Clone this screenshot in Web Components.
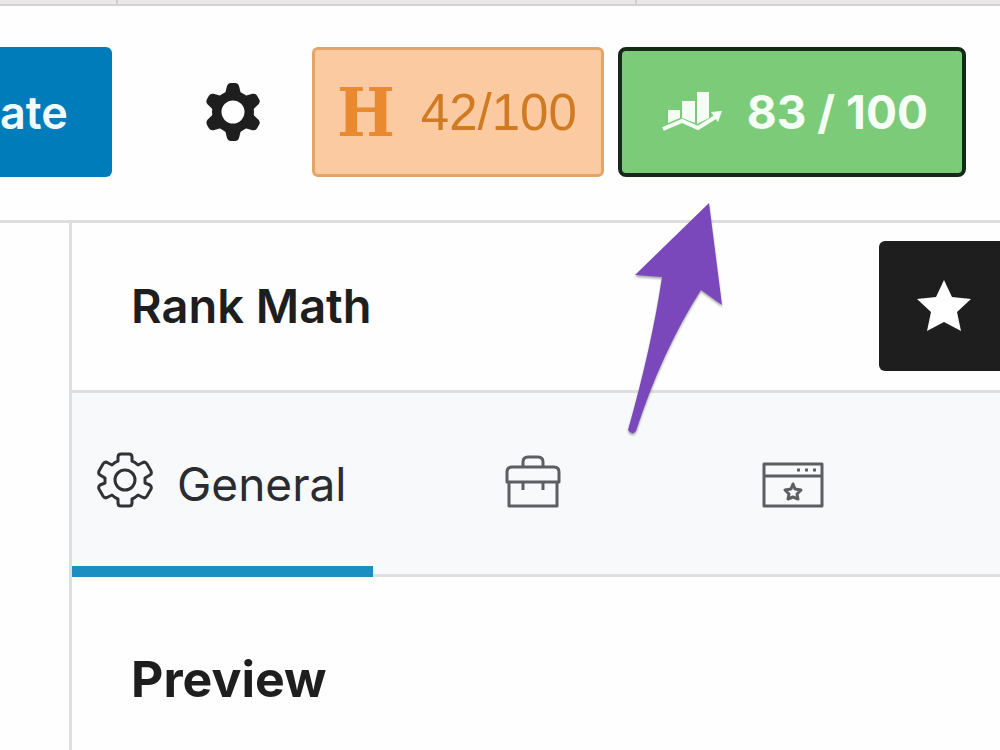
<!DOCTYPE html>
<html lang="en">
<head>
<meta charset="utf-8">
<title>Rank Math</title>
<style>
  body { margin: 0; background: #fefefe; color: #1e1e1e; font-family: Inter, "Liberation Sans", sans-serif; overflow: hidden; }
</style>
</head>
<body>
<editor-page></editor-page>
<script>
class Base extends HTMLElement {
  constructor() {
    super();
    this.attachShadow({ mode: 'open' }).innerHTML =
      '<style>*{box-sizing:border-box}button{font:inherit;color:inherit;margin:0;border:0;background:none;cursor:pointer}svg{display:block;flex:none}</style>' + this.constructor.html;
  }
}

customElements.define('browser-strip', class extends Base {
  static html = `
    <style>
      :host { display: grid; grid-template-columns: 118px 519px 1fr; height: 6px; background: #e9e7e8; border-bottom: 2px solid #d4d2d3; }
      i { border-right: 2px solid #cfcdce; }
      i:last-child { border: 0; }
    </style><i></i><i></i><i></i>`;
});

customElements.define('update-button', class extends Base {
  static html = `
    <style>
      :host { display: block; }
      button { height: 130px; padding: 0 44px 0 0; background: #007cba; color: #f0fbff; border-radius: 0 6px 6px 0; font-size: 45px; font-weight: 600; }
    </style><button type="button"><slot></slot></button>`;
});

customElements.define('settings-button', class extends Base {
  static html = `
    <style>:host { display: block; } button { padding: 0; display: block; }</style>
    <button type="button" aria-label="Settings">
      <svg width="56" height="60" viewBox="-28 -30 56 60" fill="#1e1e1e">
        <path fill-rule="evenodd" d="M0-21A21 21 0 1 1 0 21A21 21 0 1 1 0-21M0-11.500A11.500 11.500 0 1 0 0 11.500A11.500 11.500 0 1 0 0-11.500"/>
        <path id="k" d="M-8-18L-6-26Q-5-29-2-29H2Q5-29 6-26L8-18L8-14H-8Z"/>
        <use href="#k" transform="rotate(60)"/><use href="#k" transform="rotate(120)"/><use href="#k" transform="rotate(180)"/><use href="#k" transform="rotate(240)"/><use href="#k" transform="rotate(300)"/>
      </svg>
    </button>`;
});

customElements.define('headline-score', class extends Base {
  static html = `
    <style>
      :host { display: block; }
      button { height: 130px; display: flex; align-items: center; gap: 26px; padding: 0 24px 0 22px; background: #fbcaa0; border: 3px solid #e5a467; border-radius: 6px; color: #d07a22; font: 51px "Liberation Sans", Arial, sans-serif; }
      b { font: bold 68px/72px "DejaVu Serif Condensed", "DejaVu Serif", serif; color: #e98a30; }
    </style>
    <button type="button"><b>H</b><slot></slot></button>`;
});

customElements.define('seo-score', class extends Base {
  static html = `
    <style>
      :host { display: block; }
      button { height: 130px; display: flex; align-items: center; gap: 24px; padding: 0 34px 0 39px; background: #7bcb79; border: 4px solid #14291a; border-radius: 8px; color: #f6fff5; font-size: 46px; font-weight: 700; }
    </style>
    <button type="button">
      <svg width="62" height="40" viewBox="0 0 62 40" fill="#f6fff5">
        <path d="M7 18H19V26L7 31Z M21 9H34V31L21 26Z M36 0H48V26L36 32Z"/>
        <path d="M2 37L21 29L37 36L56 24" fill="none" stroke="#f6fff5" stroke-width="4"/>
        <path d="M50 20L61 19L57 30Z"/>
      </svg>
      <slot></slot>
    </button>`;
});

customElements.define('editor-header', class extends Base {
  static html = `
    <style>
      :host { display: flex; align-items: center; padding: 41px 34px 43px 0; border-bottom: 3px solid #dedede; }
      .tools { margin-left: auto; display: flex; align-items: center; }
      settings-button { margin-right: 51px; }
      headline-score { margin-right: 14px; }
    </style>
    <update-button>ate</update-button>
    <div class="tools">
      <settings-button></settings-button>
      <headline-score>42/100</headline-score>
      <seo-score>83 / 100</seo-score>
    </div>`;
});

customElements.define('panel-header', class extends Base {
  static html = `
    <style>
      :host { display: flex; align-items: center; justify-content: space-between; padding: 18px 0 19px 59px; border-bottom: 3px solid #dedede; overflow: hidden; }
      h2 { margin: 0; font-size: 47px; line-height: 56px; font-weight: 600; }
      button { width: 121px; height: 130px; padding: 0 0 0 38px; background: #1e1e1e; border-radius: 6px 0 0 6px; }
    </style>
    <h2><slot></slot></h2>
    <button type="button" aria-label="Unpin from toolbar">
      <svg width="54" height="52" viewBox="0 0 54 52" fill="#fff"><path d="M27 0L35 17L54 19L40 32L44 51L27 42L10 51L14 32L0 19L19 17Z"/></svg>
    </button>`;
});

customElements.define('panel-tabs', class extends Base {
  static html = `
    <style>
      :host { display: flex; background: #f8f9fb; box-shadow: inset 0 -3px #dedede; }
      button { flex: none; width: 260px; height: 184px; padding: 0; display: flex; align-items: center; justify-content: center; }
      .active { width: auto; margin-right: 30px; padding: 8px 27px 0 25px; gap: 24px; border-bottom: 11px solid #1a8fc0; font-size: 46px; color: #2a2c2f; }
      svg { fill: none; stroke: #5c5e62; stroke-width: 3; stroke-linejoin: round; }
      .active svg { stroke: #303236; margin-bottom: 8px; }
    </style>
    <button type="button" class="active">
      <svg width="56" height="56" viewBox="-28 -28 56 56">
        <circle r="10"/>
        <path d="M-7-23Q-7-26-4-26H4Q7-26 7-23V-19Q10-18 13-15L17-17Q20-19 22-16L26-9Q27-6 25-5L20-2V3L25 5Q27 7 26 9L22 16Q20 19 17 17L13 15Q10 18 7 19V23Q7 26 4 26H-4Q-7 26-7 23V19Q-10 18-13 15L-17 17Q-20 19-22 16L-26 9Q-27 7-25 5L-20 3V-2L-25-5Q-27-6-26-9L-22-16Q-20-19-17-17L-13-15Q-10-18-7-19Z"/>
      </svg>
      <slot></slot>
    </button>
    <button type="button" aria-label="Advanced">
      <svg width="58" height="60" viewBox="-1 0 58 60">
        <path d="M7 12H49Q54 12 54 17V27H2V17Q2 12 7 12Z M4 27V51H52V27 M18 12V7Q18 2 23 2H33Q38 2 38 7V12 M18 27V35M38 27V35"/>
      </svg>
    </button>
    <button type="button" aria-label="Schema">
      <svg width="62" height="46" viewBox="0 0 62 46">
        <path d="M2 2H60V44H2Z M2 14H60"/>
        <path d="M31 22L33 27L39 28L35 32L36 37L31 35L26 37L27 32L23 28L29 27Z"/>
        <path d="M35 8H38M43 8H46M51 8H54"/>
      </svg>
    </button>`;
});

customElements.define('preview-section', class extends Base {
  static html = `
    <style>
      :host { display: block; padding: 72px 59px 40px; }
      h3 { margin: 0; font-size: 50px; line-height: 60px; font-weight: 700; }
    </style><h3><slot></slot></h3>`;
});

customElements.define('purple-arrow', class extends Base {
  static html = `
    <style>:host { display: block; position: absolute; left: 620px; top: 198px; pointer-events: none; } svg { filter: drop-shadow(0 2px 1px #0005); }</style>
    <svg width="110" height="245" viewBox="620 198 110 245" fill="#7a48bb">
      <path d="M709 203L722 305L701 290Q662 351 636 431Q632 436 628 430Q652 345 662 277L635 275Z"/>
    </svg>`;
});

customElements.define('editor-page', class extends Base {
  static html = `
    <style>
      :host { display: flex; flex-direction: column; min-height: 100vh; position: relative; }
      main { flex: 1; display: grid; grid-template-columns: 69px 1fr; }
      aside { border-left: 3px solid #dedede; min-width: 0; }
      panel-tabs { overflow: hidden; }
    </style>
    <browser-strip></browser-strip>
    <editor-header></editor-header>
    <main>
      <div></div>
      <aside>
        <panel-header>Rank Math</panel-header>
        <panel-tabs>General</panel-tabs>
        <preview-section>Preview</preview-section>
      </aside>
    </main>
    <purple-arrow></purple-arrow>`;
});
</script>
</body>
</html>
